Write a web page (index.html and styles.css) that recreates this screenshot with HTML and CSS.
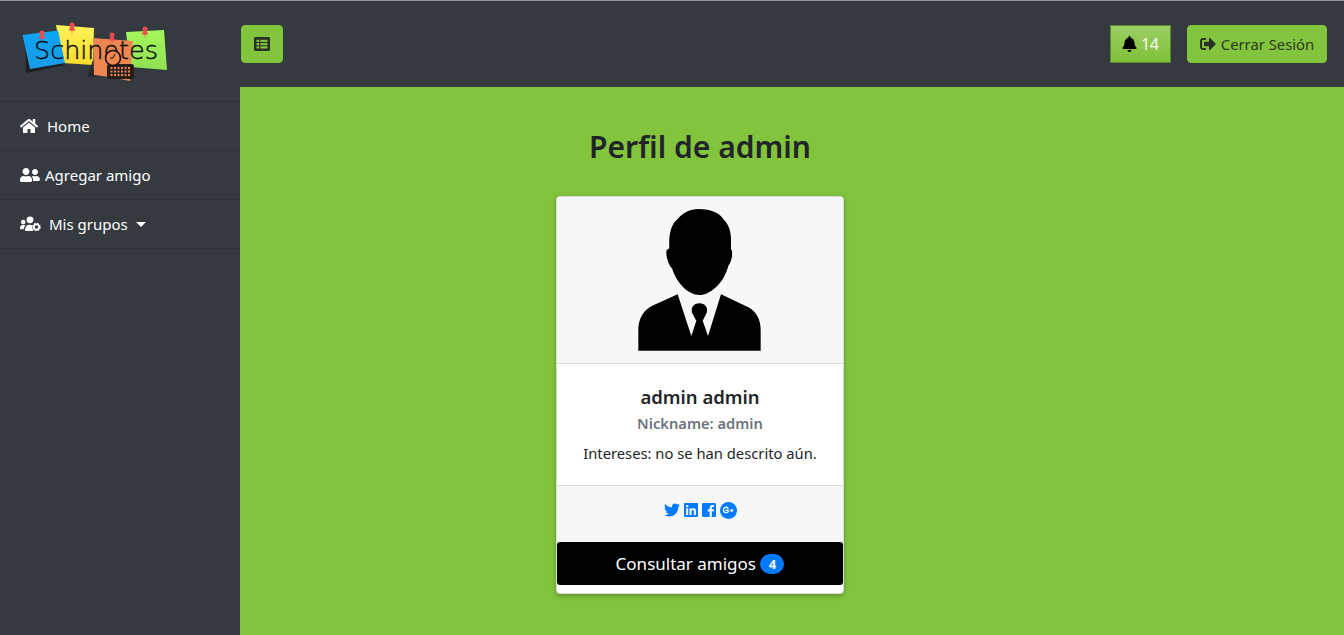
FILE: index.html
```html
<!DOCTYPE html>
<html>
  <head>
    <title>Schinotes | Perfil</title>
    <link rel="stylesheet" href="styles.css">
  </head>
  <body>
    <div class="wrapper">
      <nav class="sidebar">
        <div class="brand">
          <svg class="logo" viewBox="0 0 170 75" width="170" height="75">
            <defs>
              <linearGradient id="noteBlue" x1="0" y1="0" x2="0" y2="1"><stop offset="0" stop-color="#0aa5f5"/><stop offset="1" stop-color="#1b9be8"/></linearGradient>
              <linearGradient id="noteYellow" x1="0" y1="0" x2="0" y2="1"><stop offset="0" stop-color="#fff35a"/><stop offset="1" stop-color="#f7dc2c"/></linearGradient>
              <linearGradient id="noteGreen" x1="0" y1="0" x2="0" y2="1"><stop offset="0" stop-color="#a6f75c"/><stop offset="1" stop-color="#8ee052"/></linearGradient>
            </defs>
            <polygon points="15,25 50,20 55,50 16,58" fill="#1d2024"/>
            <polygon points="46,10 84,13 83,50 53,48" fill="url(#noteYellow)"/>
            <polygon points="116,17 154,15 157,55 120,52" fill="url(#noteGreen)"/>
            <polygon points="12.500,20 48,15.500 55,48 20,54" fill="url(#noteBlue)"/>
            <polygon points="83,45 77,62 90,62" fill="#25282d"/>
            <polygon points="83,23 123,26 120,66 100,62 84,60" fill="#ee8650"/>
            <g class="pin">
              <path d="M29.500 17h5l-1 3 2 3.500h-3l-.5 5-.5-5h-3l2-3.500z"/><circle cx="32" cy="18" r="2.500"/>
              <path d="M59.500 9h5l-1 3 2 3.500h-3l-.5 5-.5-5h-3l2-3.500z"/><circle cx="62" cy="10" r="2.500"/>
              <path d="M99.500 19h5l-1 3 2 3.500h-3l-.5 5-.5-5h-3l2-3.500z"/><circle cx="102" cy="20" r="2.500"/>
              <path d="M132.500 13h5l-1 3 2 3.500h-3l-.5 5-.5-5h-3l2-3.500z"/><circle cx="135" cy="14" r="2.500"/>
            </g>
            <text class="logo-text" x="24" y="44" textLength="124" lengthAdjust="spacingAndGlyphs">Schinotes</text>
            <rect x="97" y="49" width="27" height="15" rx="2.500" fill="#2a1c16"/>
            <path class="cal-dots" d="M100.500 53h20M100.500 56.500h20M100.500 60h20"/>
            <circle cx="103" cy="43" r="7.500" fill="#ee8650" stroke="#111" stroke-width="1.600"/>
            <path d="M103 43l2-4M103 43h-3" stroke="#111" stroke-width="1" fill="none"/>
          </svg>
        </div>
        <ul class="menu">
          <li>
            <a href="#">
              <svg class="ic ic-home" viewBox="0 0 576 512"><path d="M280.37 148.26L96 300.11V464a16 16 0 0 0 16 16l112.06-.29a16 16 0 0 0 15.92-16V368a16 16 0 0 1 16-16h64a16 16 0 0 1 16 16v95.64a16 16 0 0 0 16 16.05L464 480a16 16 0 0 0 16-16V300L295.67 148.26a12.19 12.19 0 0 0-15.3 0zM571.6 251.47L488 182.56V44.05a12 12 0 0 0-12-12h-56a12 12 0 0 0-12 12v72.61L318.47 43a48 48 0 0 0-61 0L4.34 251.47a12 12 0 0 0-1.6 16.9l25.5 31A12 12 0 0 0 45.15 301l235.22-193.74a12.19 12.19 0 0 1 15.3 0L530.9 301a12 12 0 0 0 16.9-1.6l25.5-31a12 12 0 0 0-1.7-16.93z"/></svg>
              <span>Home</span>
            </a>
          </li>
          <li>
            <a href="#">
              <svg class="ic ic-friends" viewBox="0 0 640 512"><path d="M192 256c61.900 0 112-50.100 112-112S253.900 32 192 32 80 82.100 80 144s50.100 112 112 112zm76.800 32h-8.300c-20.800 10-43.900 16-68.500 16s-47.600-6-68.500-16h-8.300C51.600 288 0 339.600 0 403.200V432c0 26.500 21.500 48 48 48h288c26.500 0 48-21.500 48-48v-28.800c0-63.600-51.600-115.200-115.200-115.200zM480 256c53 0 96-43 96-96s-43-96-96-96-96 43-96 96 43 96 96 96zm48 32h-3.800c-13.900 4.800-28.600 8-44.200 8s-30.300-3.200-44.200-8H432c-20.400 0-39.200 5.900-55.700 15.400 24.400 26.300 39.700 61.200 39.700 99.800v38.400c0 2.200-.5 4.300-.6 6.400H592c26.500 0 48-21.500 48-48 0-61.900-50.100-112-112-112z"/></svg>
              <span>Agregar amigo</span>
            </a>
          </li>
          <li>
            <a href="#">
              <svg class="ic ic-cog" viewBox="0 0 21 16">
                <circle cx="10" cy="3.800" r="3.400"/>
                <circle cx="3.200" cy="6" r="2.300"/>
                <path d="M0 12.200c0-2.300 1.400-3.500 3.200-3.500 1 0 1.800.3 2.400.8C4.400 10.300 3.800 11.200 3.700 13.200H1c-.6 0-1-.4-1-1z"/>
                <path d="M5 14c0-3.200 2-5.200 5-5.200 1 0 1.800.2 2.500.5-.4 2.300-.2 4 .9 5.700H6c-.6 0-1-.4-1-1z"/>
                <circle class="gear-ring" cx="16.500" cy="11" r="2.700"/>
                <circle class="gear" cx="16.500" cy="11" r="3.600"/>
              </svg>
              <span>Mis grupos</span>
              <i class="caret"></i>
            </a>
          </li>
        </ul>
      </nav>

      <div class="main">
        <header class="topbar">
          <button class="btn btn-menu">
            <svg class="ic-btn" viewBox="0 0 512 512"><path fill-rule="evenodd" d="M48 32h416c26.500 0 48 21.500 48 48v352c0 26.500-21.500 48-48 48H48c-26.500 0-48-21.500-48-48V80c0-26.500 21.500-48 48-48zM80 124v56c0 4 4 8 8 8h72c4 0 8-4 8-8v-56c0-4-4-8-8-8H88c-4 0-8 4-8 8zm0 104v56c0 4 4 8 8 8h72c4 0 8-4 8-8v-56c0-4-4-8-8-8H88c-4 0-8 4-8 8zm0 104v56c0 4 4 8 8 8h72c4 0 8-4 8-8v-56c0-4-4-8-8-8H88c-4 0-8 4-8 8zM204 124v56c0 4 4 8 8 8h212c4 0 8-4 8-8v-56c0-4-4-8-8-8H212c-4 0-8 4-8 8zm0 104v56c0 4 4 8 8 8h212c4 0 8-4 8-8v-56c0-4-4-8-8-8H212c-4 0-8 4-8 8zm0 104v56c0 4 4 8 8 8h212c4 0 8-4 8-8v-56c0-4-4-8-8-8H212c-4 0-8 4-8 8z"/></svg>
          </button>
          <div class="top-right">
            <button class="btn btn-bell">
              <svg class="ic-bell" viewBox="0 0 448 512"><path d="M224 512c35.320 0 63.970-28.650 63.970-64H160.030c0 35.350 28.650 64 63.970 64zm215.390-149.710c-19.320-20.760-55.470-51.990-55.470-154.290 0-77.700-54.480-139.900-127.940-155.160V32c0-17.670-14.320-32-31.980-32s-31.980 14.330-31.980 32v20.840C118.560 68.100 64.080 130.300 64.080 208c0 102.300-36.150 133.530-55.470 154.290-6 6.450-8.660 14.160-8.610 21.710.11 16.400 12.980 32 32.100 32h383.800c19.120 0 32-15.600 32.100-32 .05-7.550-2.610-15.270-8.610-21.710z"/></svg>
              <span>14</span>
            </button>
            <button class="btn btn-logout">
              <svg class="ic-btn" viewBox="0 0 512 512"><path d="M497 273L329 441c-15 15-41 4.500-41-17v-96H152c-13.300 0-24-10.700-24-24v-96c0-13.300 10.700-24 24-24h136V88c0-21.400 25.900-32 41-17l168 168c9.300 9.400 9.300 24.600 0 34zM192 436v-40c0-6.600-5.400-12-12-12H96c-17.700 0-32-14.300-32-32V160c0-17.700 14.300-32 32-32h84c6.600 0 12-5.400 12-12V76c0-6.600-5.400-12-12-12H96c-53 0-96 43-96 96v192c0 53 43 96 96 96h84c6.600 0 12-5.400 12-12z"/></svg>
              <span>Cerrar Sesión</span>
            </button>
          </div>
        </header>

        <section class="content">
          <div class="profile">
            <h1>Perfil de admin</h1>
            <div class="card">
              <div class="card-top">
                <svg class="avatar" viewBox="0 0 480 480" width="160" height="160">
                  <path d="M235 27C275 27 300 40 312 60C328 75 334 100 333 125L333 147C340 155 336 185 325 197C312 250 270 285 238 285C205 285 170 250 156 205C145 195 136 165 140 150L148 145C146 105 152 75 172 58C188 38 210 27 235 27Z"/>
                  <path d="M173 283L214 408L229 362L216 338C212 322 222 310 238 310C255 310 265 322 260 338L248 362L264 408L303 283L385 322C410 335 422 360 422 390L422 452L55 452L55 390C55 355 72 328 100 316Z"/>
                </svg>
              </div>
              <div class="card-body">
                <h4>admin admin</h4>
                <h6>Nickname: admin</h6>
                <p>Intereses: no se han descrito aún.</p>
              </div>
              <div class="card-social">
                <a href="#"><svg class="soc soc-tw" viewBox="0 0 512 512"><path d="M459.370 151.716c.325 4.548.325 9.097.325 13.645 0 138.720-105.583 298.558-298.558 298.558-59.452 0-114.680-17.219-161.137-47.106 8.447.974 16.568 1.299 25.340 1.299 49.055 0 94.213-16.568 130.274-44.832-46.132-.975-84.792-31.188-98.112-72.772 6.498.974 12.995 1.624 19.818 1.624 9.421 0 18.843-1.300 27.614-3.573-48.081-9.747-84.143-51.980-84.143-102.985v-1.299c13.969 7.797 30.214 12.670 47.431 13.319-28.264-18.843-46.781-51.005-46.781-87.391 0-19.492 5.197-37.360 14.294-52.954 51.655 63.675 129.300 105.258 216.365 109.807-1.624-7.797-2.599-15.918-2.599-24.040 0-57.828 46.782-104.934 104.934-104.934 30.213 0 57.502 12.670 76.670 33.137 23.715-4.548 46.456-13.320 66.599-25.340-7.798 24.366-24.366 44.833-46.132 57.827 21.117-2.273 41.584-8.122 60.426-16.243-14.292 20.791-32.161 39.308-52.628 54.253z"/></svg></a>
                <a href="#"><svg class="soc" viewBox="0 0 448 512"><path d="M416 32H31.900C14.300 32 0 46.500 0 64.300v383.400C0 465.500 14.300 480 31.900 480H416c17.600 0 32-14.500 32-32.300V64.300c0-17.800-14.400-32.300-32-32.300zM135.400 416H69V202.200h66.500V416zm-33.200-243c-21.300 0-38.500-17.300-38.500-38.500S80.900 96 102.200 96c21.200 0 38.500 17.300 38.500 38.500 0 21.300-17.200 38.500-38.500 38.500zm282.100 243h-66.400V312c0-24.800-.5-56.700-34.500-56.700-34.600 0-39.900 27-39.900 54.900V416h-66.400V202.200h63.700v29.200h.9c8.900-16.800 30.600-34.500 62.900-34.500 67.200 0 79.700 44.300 79.700 101.900V416z"/></svg></a>
                <a href="#"><svg class="soc" viewBox="0 0 448 512"><path d="M448 80v352c0 26.500-21.500 48-48 48h-85.300V302.800h60.600l8.700-67.600h-69.300V192c0-19.600 5.400-32.900 33.500-32.900H384V98.700c-6.200-.8-27.400-2.700-52.200-2.700-51.600 0-87 31.500-87 89.400v49.900H184v67.600h60.900V480H48c-26.500 0-48-21.500-48-48V80c0-26.500 21.500-48 48-48h352c26.500 0 48 21.500 48 48z"/></svg></a>
                <a href="#"><svg class="soc soc-gp" viewBox="0 0 16 16"><circle cx="8" cy="8" r="8" fill="#007bff"/><path class="gp-mark" d="M8.200 7.800H5.200M7.900 6.200A2.500 2.500 0 1 0 8.200 8M11 6.500v3M9.500 8h3"/></svg></a>
              </div>
              <div class="card-action">
                <a class="btn-friends" href="#">Consultar amigos <span class="badge">4</span></a>
              </div>
            </div>
          </div>
        </section>
      </div>
    </div>
  </body>
</html>
```

FILE: styles.css
```css
html, body {margin: 0; padding: 0; height: 100%;}
body {font-family: "Noto Sans", "Open Sans", sans-serif; font-size: 15px; color: #212529; background-color: #343a40; overflow: hidden;}
.wrapper {display: flex; height: 635px; border-top: 1px solid #8f9296; box-sizing: border-box;}

/* sidebar */
.sidebar {width: 240px; flex: none; background-color: #343a40;}
.brand {height: 100px; box-sizing: border-box; padding: 14px 0 0 10px;}
.logo {display: block;}
.logo-text {font-family: "DejaVu Sans", sans-serif; font-weight: 200; font-size: 24px; fill: #0c0c0c; stroke: #0c0c0c; stroke-width: .4px;}
.pin path, .pin circle {fill: #ec4a4f;}
.cal-dots {stroke: #ee8650; stroke-width: 2px; stroke-dasharray: 2 1.500; fill: none;}
.menu {list-style: none; margin: 0; padding: 0; border-top: 1px solid #2d3238;}
.menu li {border-bottom: 1px solid #2d3238;}
.menu a {display: flex; align-items: center; height: 48px; padding-left: 20px; color: #fff; text-decoration: none;}
.ic {fill: #fff; flex: none; display: block;}
.ic-home {width: 18px; height: 16px; margin-right: 9px;}
.ic-friends {width: 20px; height: 16px; margin-right: 5px;}
.ic-cog {width: 21px; height: 16px; margin-right: 8px;}
.gear-ring {fill: none; stroke: #fff; stroke-width: 1.800px;}
.gear {fill: none; stroke: #fff; stroke-width: 1.400px; stroke-dasharray: 1.600 1.230;}
.caret {display: block; width: 0; height: 0; margin-left: 8px; border-top: 5px solid #fff; border-left: 5px solid transparent; border-right: 5px solid transparent;}

/* top bar */
.main {flex: 1; display: flex; flex-direction: column; min-width: 0;}
.topbar {height: 86px; flex: none; box-sizing: border-box; background-color: #343a40; display: flex; justify-content: space-between; align-items: flex-start; padding: 24px 17px 0 1px;}
.top-right {display: flex; gap: 16px;}
.btn {height: 38px; box-sizing: border-box; border: 1px solid #82c43c; border-radius: 4px; background-color: #82c43c; color: #2c3a22; font-family: inherit; font-size: 14.800px; display: flex; align-items: center; justify-content: center; padding: 0;}
.btn-menu {width: 42px;}
.btn-bell {width: 61px; gap: 4px; color: #fff; font-size: 15.500px; border-radius: 0; border-color: #5a8a2b; background: linear-gradient(#9ccf63, #7fc138);}
.btn-logout {width: 140px; gap: 5px;}
.ic-btn {width: 16px; height: 16px; fill: #2b3027;}
.ic-bell {width: 15px; height: 16px; fill: #000;}

/* profile */
.content {flex: 1; background-color: #82c43c;}
.profile {width: 920px; display: flex; flex-direction: column; align-items: center;}
h1 {font-size: 30px; font-weight: 600; line-height: 38px; margin: 41px 0 30px;}
.card {width: 288px; height: 398px; box-sizing: border-box; background-color: #fff; border: 1px solid #d9d9d9; border-radius: 4px; box-shadow: 0 2px 5px rgba(0,0,0,.25); text-align: center;}
.card-top {height: 166px; background-color: #f7f7f7; border-bottom: 1px solid #dcdcdc; border-radius: 3px 3px 0 0; display: flex; justify-content: center; align-items: flex-start;}
.avatar {display: block; margin-top: 3px;}
.card-body {height: 122px; box-sizing: border-box; border-bottom: 1px solid #dcdcdc; padding-top: 20px;}
h4 {margin: 0; font-size: 18.500px; font-weight: 600; line-height: 26px;}
h6 {margin: 2px 0 0; font-size: 14.700px; font-weight: 600; line-height: 22px; color: #6c757d;}
.card-body p {margin: 8px 0 0; font-size: 14.750px; line-height: 22px;}
.card-social {height: 56px; box-sizing: border-box; background-color: #f7f7f7; display: flex; justify-content: center; gap: 4px; padding-top: 16px;}
.card-social a {display: block; height: 16px;}
.soc {display: block; width: 14px; height: 16px; fill: #007bff;}
.soc-tw {width: 16px;}
.soc-gp {width: 17px; height: 17px;}
.gp-mark {fill: none; stroke: #f7f7f7; stroke-width: 1.300px;}
.btn-friends {display: flex; align-items: center; justify-content: center; height: 43px; background-color: #000; color: #fff; border-radius: 3px; text-decoration: none; font-size: 17px; white-space: pre;}
.badge {display: block; width: 24px; height: 20px; line-height: 20px; border-radius: 10px; background-color: #007bff; color: #fff; font-size: 13px; font-weight: 700;}
```
